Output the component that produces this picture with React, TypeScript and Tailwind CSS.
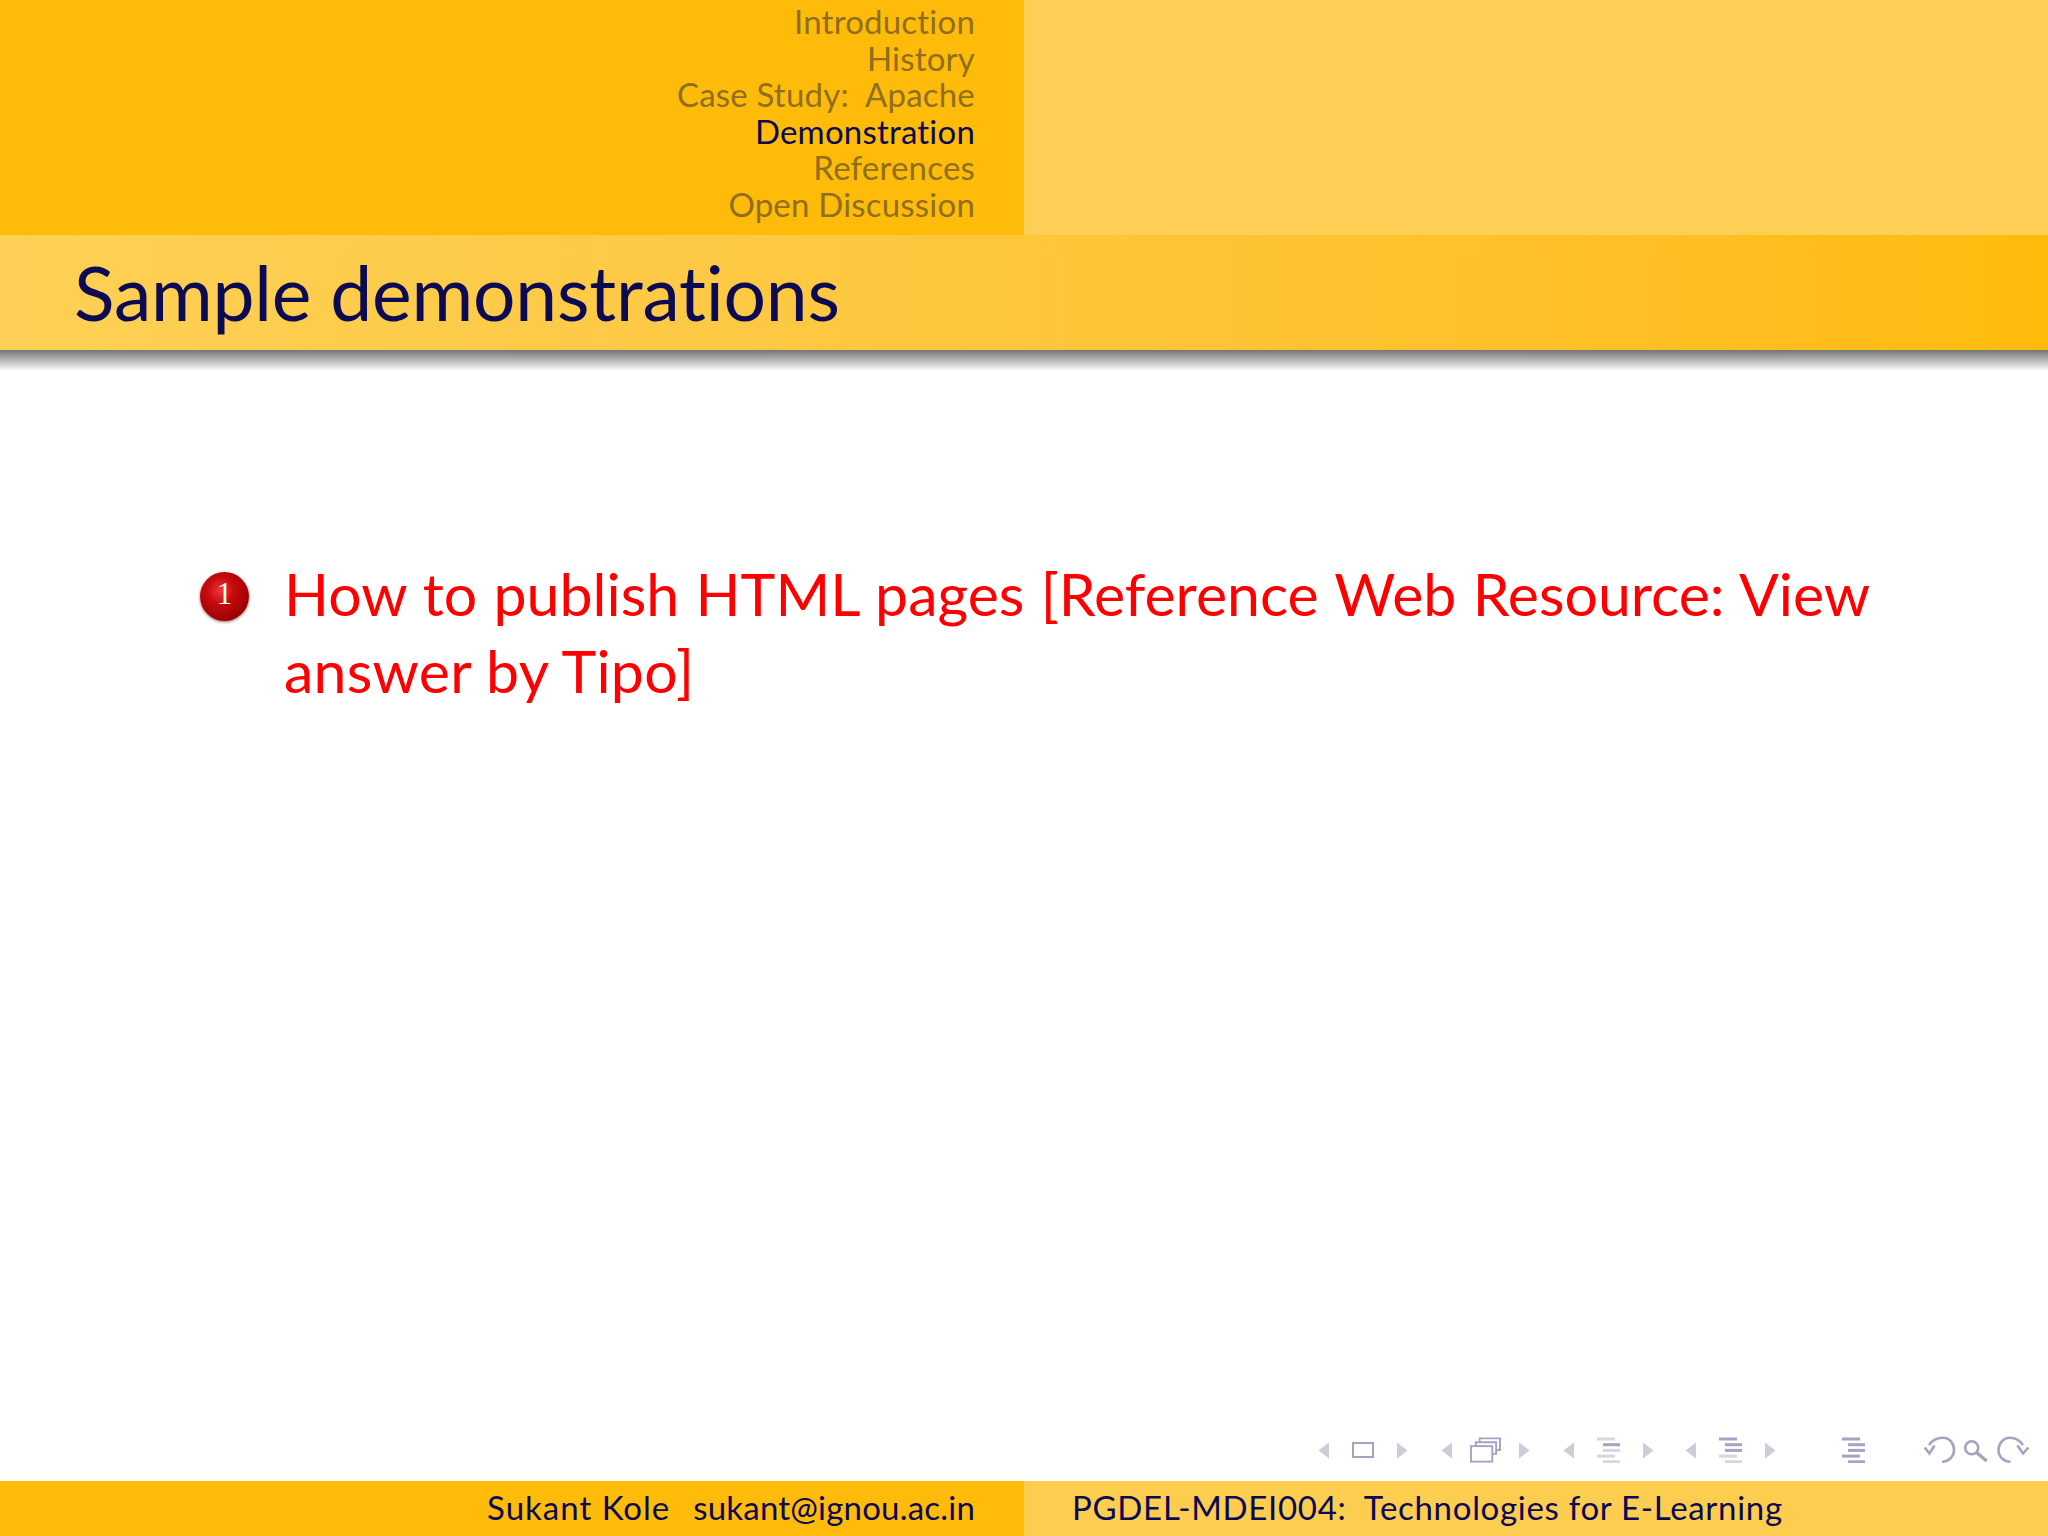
const sections = [
  { name: "Introduction" },
  { name: "History" },
  { name: "Case Study:  Apache" },
  { name: "Demonstration", active: true },
  { name: "References" },
  { name: "Open Discussion" },
];

const Arrow = ({ dir }: { dir: "left" | "right" }) => (
  <svg width="12" height="17" viewBox="0 0 12 17" className="block">
    <path d={dir === "left" ? "M11 0.5V16.5L0.5 8.5Z" : "M1 0.5V16.5L11.5 8.5Z"} fill="#cdcdd8" />
  </svg>
);

const FrameIcon = () => (
  <svg width="22" height="16" viewBox="0 0 22 16" className="block">
    <rect x="1" y="1" width="20" height="14" fill="none" stroke="#a5a3c1" strokeWidth="2" />
  </svg>
);

const SlidesIcon = () => (
  <svg width="31" height="26" viewBox="0 0 32 26" className="block">
    <path d="M10 5V1H31V13H27M6 9V5H27V17H23" fill="none" stroke="#a5a3c1" strokeWidth="2" />
    <rect x="1" y="9" width="22" height="16" fill="none" stroke="#a5a3c1" strokeWidth="2" />
  </svg>
);

// little stack of bars used for subsection / section / document
const BarsIcon = ({ colors }: { colors: string[] }) => (
  <svg width="23" height="26" viewBox="0 0 23 26" className="block">
    {colors.map((c, i) => (
      <rect key={i} x={i === 0 || i === 3 ? 0 : 6} y={i * 5.7 + 0.5} width={i === 0 || i === 3 ? 18 : 17} height="3" fill={c} />
    ))}
  </svg>
);

const dark = "#a5a3c1";
const light = "#d6d5e2";

const NavGroup = ({ className = "gap-[22px]", children }: { className?: string; children: React.ReactNode }) => (
  <div className={`flex items-center ${className}`}>
    <Arrow dir="left" />
    {children}
    <Arrow dir="right" />
  </div>
);

export default function App() {
  return (
    <div className="flex h-[1536px] w-[2048px] flex-col overflow-hidden bg-white font-['Lato','Liberation_Sans',sans-serif]">
      <div className="flex h-[235px] shrink-0">
        <div className="flex w-[1024px] flex-col items-end bg-[#ffbb0a] pr-[49px] pt-[3px] text-[33px] leading-[36.6px] tracking-[0.2px]">
          {sections.map((s) => (
            <div key={s.name} className={`whitespace-pre ${s.active ? "text-[#0b0a52]" : "text-[#8f6e1e]"}`}>
              {s.name}
            </div>
          ))}
        </div>
        <div className="flex-1 bg-[#fdd055]" />
      </div>

      <div className="flex h-[115px] shrink-0 items-center bg-gradient-to-r from-[#fdd055] to-[#ffbb0a] pl-[74px] text-[75px] leading-none tracking-[-0.2px] text-[#0b0a52]">
        Sample demonstrations
      </div>
      <div className="h-[21px] shrink-0 bg-gradient-to-b from-[#757575] to-white" />

      <div className="flex flex-1 items-start pl-[200px] pr-[179px] pt-[184px]">
        <div className="mr-[35px] mt-[17px] flex h-[49px] w-[49px] shrink-0 items-center justify-center rounded-full bg-[radial-gradient(circle_at_42%_38%,#ee3a40_0%,#c8090d_32%,#9a0204_72%,#680002_100%)] pb-[4px] font-['Liberation_Serif',serif] text-[31px] text-white shadow-[0_1px_3px_rgba(90,0,0,0.6)]">
          1
        </div>
        <p className="text-justify text-[59px] leading-[77px] text-[#ff0000]">
          How to publish HTML pages [Reference Web Resource: View{" "}
          <span className="tracking-[0.27px]">answer by Tipo]</span>
        </p>
      </div>

      <div className="flex shrink-0 items-center justify-end pb-[17px] pr-[19px]">
        <div className="flex items-center gap-[33px]">
          <NavGroup><FrameIcon /></NavGroup>
          <NavGroup className="gap-[17px]"><SlidesIcon /></NavGroup>
          <NavGroup><BarsIcon colors={[light, dark, light, light, light]} /></NavGroup>
          <NavGroup className="-ml-[2px] gap-[22px]"><BarsIcon colors={[dark, dark, dark, light, light]} /></NavGroup>
          <div className="ml-[33px]">
            <BarsIcon colors={[dark, dark, dark, dark, dark]} />
          </div>
          <svg width="105" height="28" viewBox="0 0 105 28" className="ml-[26px] block" fill="none" stroke="#a5a3c1" strokeWidth="2.6">
            <path d="M5 9C9 3 15 1.700 19 1.700C26 1.700 30 8 30 14C30 21 24 25.700 18 25.700" />
            <path d="M0.700 11.500L5.500 17.500L10.500 9.500" />
            <circle cx="47.700" cy="11.700" r="6.500" />
            <path d="M52.500 16.500L62.700 25" strokeWidth="3.400" />
            <path d="M99 9C95 3 90 1.700 86 1.700C79 1.700 74.500 8 74.500 14C74.500 21 80 25.700 86.500 25.700" />
            <path d="M104.300 11.500L99 17.500L93.500 9.500" />
          </svg>
        </div>
      </div>

      <div className="flex h-[55px] shrink-0 text-[33px] leading-[53px] tracking-[0.7px] text-[#0b0a52]">
        <div className="flex w-[1024px] justify-end whitespace-pre bg-[#ffbb0a] pr-[49px]">
          <span className="mr-[23px] tracking-[1px]">Sukant Kole</span>
          <span className="tracking-[0.2px]">sukant@ignou.ac.in</span>
        </div>
        <div className="flex-1 whitespace-pre bg-[#fdcd50] pl-[48px]">
          PGDEL-MDEI004:  Technologies for E-Learning
        </div>
      </div>
    </div>
  );
}
